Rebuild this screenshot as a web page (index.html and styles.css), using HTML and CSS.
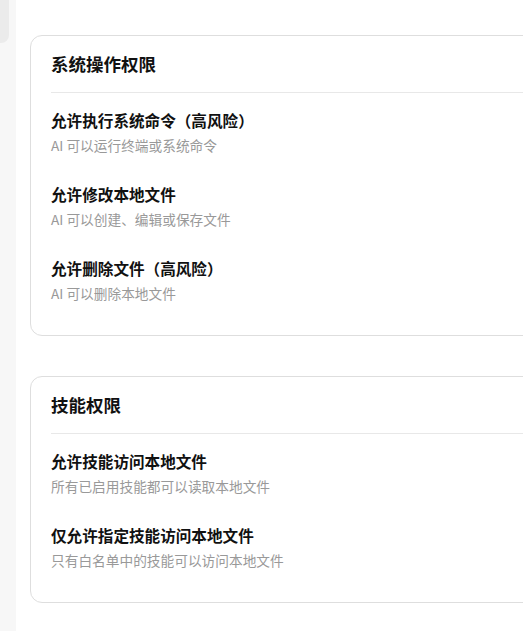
FILE: index.html
```html
<!DOCTYPE html>
<html lang="zh-CN">
<head>
<meta charset="utf-8">
<link rel="stylesheet" href="styles.css">
</head>
<body>
<div class="app">
  <aside class="sidebar"><div class="pill"></div></aside>
  <main class="main">
    <section class="card">
      <h2 class="card-title">系统操作权限</h2>
      <div class="items">
        <div class="item">
          <div class="item-title">允许执行系统命令（高风险）</div>
          <div class="item-desc">AI 可以运行终端或系统命令</div>
        </div>
        <div class="item">
          <div class="item-title">允许修改本地文件</div>
          <div class="item-desc">AI 可以创建、编辑或保存文件</div>
        </div>
        <div class="item">
          <div class="item-title">允许删除文件（高风险）</div>
          <div class="item-desc">AI 可以删除本地文件</div>
        </div>
      </div>
    </section>
    <section class="card">
      <h2 class="card-title">技能权限</h2>
      <div class="items">
        <div class="item">
          <div class="item-title">允许技能访问本地文件</div>
          <div class="item-desc">所有已启用技能都可以读取本地文件</div>
        </div>
        <div class="item">
          <div class="item-title">仅允许指定技能访问本地文件</div>
          <div class="item-desc">只有白名单中的技能可以访问本地文件</div>
        </div>
      </div>
    </section>
  </main>
</div>
</body>
</html>
```
FILE: styles.css
```css
html, body {
  margin: 0;
  padding: 0;
  background: #ffffff;
  overflow: hidden;
}
body {
  font-family: "Noto Sans CJK SC", "Noto Sans", "Liberation Sans", sans-serif;
  color: #111111;
}
.app {
  display: flex;
  height: 631px;
}
.sidebar {
  width: 16px;
  flex: 0 0 16px;
  background: #f7f7f7;
}
.pill {
  width: 9px;
  height: 43px;
  background: #ebebeb;
  border-radius: 0 0 8px 0;
}
.main {
  flex: 1;
  min-width: 0;
  padding: 35px 0 0 14px;
  display: flex;
  flex-direction: column;
  gap: 40px;
}
.card {
  width: 640px;
  flex: 0 0 auto;
  box-sizing: border-box;
  border: 1px solid #dedede;
  border-radius: 12px;
  padding: 17px 0 0 20px;
}
.card-title {
  margin: 0;
  font-size: 17.5px;
  line-height: 22px;
  font-weight: 700;
  color: #111111;
  padding-bottom: 17px;
  border-bottom: 1px solid #e8e8e8;
}
.items {
  display: flex;
  flex-direction: column;
  gap: 28px;
  padding: 16px 0 32px 0;
}
.item {
  display: flex;
  flex-direction: column;
  gap: 4px;
}
.item-title {
  font-size: 15.6px;
  line-height: 22px;
  font-weight: 700;
  color: #111111;
}
.item-desc {
  font-size: 13.7px;
  line-height: 20px;
  color: #999999;
}
```
